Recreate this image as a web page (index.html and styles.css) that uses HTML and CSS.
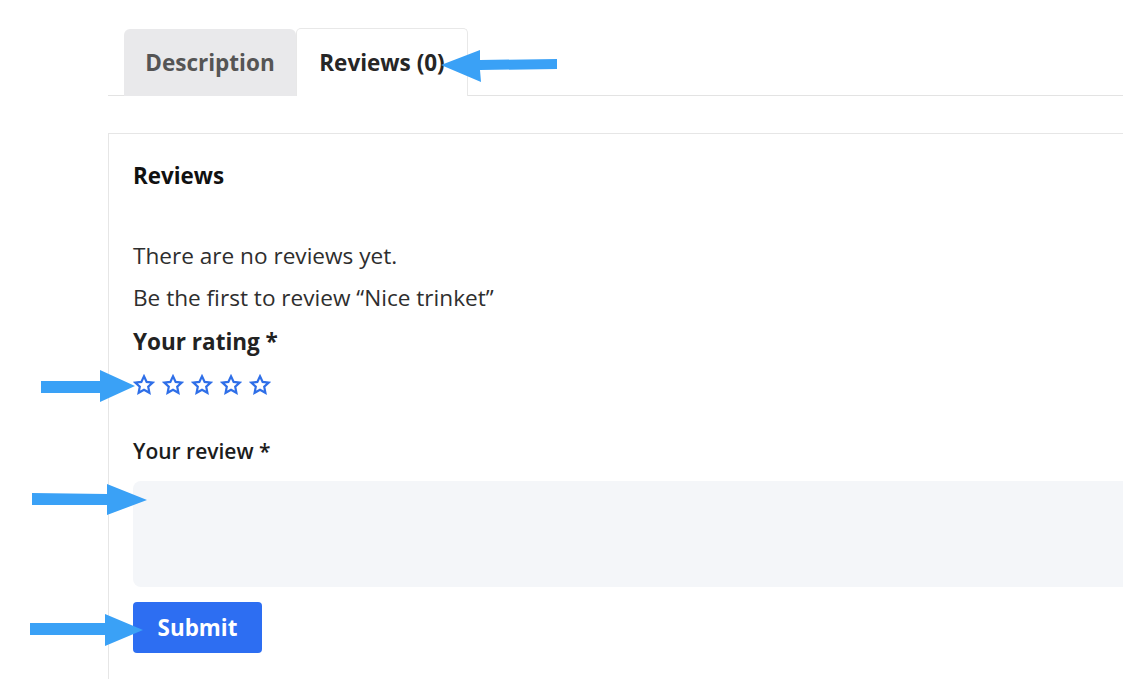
FILE: index.html
```html
<!DOCTYPE html>
<html lang="en">
<head>
	<meta charset="UTF-8">
	<title>Nice trinket - Reviews</title>
	<link rel="stylesheet" href="styles.css">
</head>
<body>
	<div class="product-tabs">
		<ul class="tabs">
			<li class="tab">Description</li>
			<li class="tab active">Reviews (0)</li>
		</ul>

		<div class="panel">
			<h2 class="panel-title">Reviews</h2>
			<p class="note first">There are no reviews yet.</p>
			<p class="note">Be the first to review “Nice trinket”</p>
			<div class="rating-label">Your rating *</div>
			<div class="stars">
				<svg viewBox="0 0 24 24"><polygon points="12 2.5 14.9 8.6 21.5 9.4 16.6 13.9 17.9 20.5 12 17.2 6.1 20.5 7.4 13.9 2.5 9.4 9.1 8.6"/></svg>
				<svg viewBox="0 0 24 24"><polygon points="12 2.5 14.9 8.6 21.5 9.4 16.6 13.9 17.9 20.5 12 17.2 6.1 20.5 7.4 13.9 2.5 9.4 9.1 8.6"/></svg>
				<svg viewBox="0 0 24 24"><polygon points="12 2.5 14.9 8.6 21.5 9.4 16.6 13.9 17.9 20.5 12 17.2 6.1 20.5 7.4 13.9 2.5 9.4 9.1 8.6"/></svg>
				<svg viewBox="0 0 24 24"><polygon points="12 2.5 14.9 8.6 21.5 9.4 16.6 13.9 17.9 20.5 12 17.2 6.1 20.5 7.4 13.9 2.5 9.4 9.1 8.6"/></svg>
				<svg viewBox="0 0 24 24"><polygon points="12 2.5 14.9 8.6 21.5 9.4 16.6 13.9 17.9 20.5 12 17.2 6.1 20.5 7.4 13.9 2.5 9.4 9.1 8.6"/></svg>
			</div>
			<label class="review-label" for="comment">Your review *</label>
			<textarea id="comment" class="review-box"></textarea>
			<button class="submit">Submit</button>
		</div>
	</div>

	<!-- annotation arrows -->
	<svg class="arrows" viewBox="0 0 1123 679">
		<polygon points="557,59 557,69 480,70 481,82 441,65 480,50 480,60"/>
		<polygon points="41,381 100,381 100,370 135,386 100,402 100,393 41,393"/>
		<polygon points="32,493 107,494 107,484 147,500 107,515 107,505 32,505"/>
		<polygon points="30,623 105,623 105,614 143,630 105,646 105,635 30,635"/>
	</svg>
</body>
</html>
```

FILE: styles.css
```css
*{
	padding:0;
	margin:0;
	box-sizing: border-box;
}
html, body{
	overflow: hidden;
}
body{
	width: 1123px;
	height: 679px;
	background: #fff;
	color: #333;
	font-family: "Open Sans", "Noto Sans", sans-serif;
	position: relative;
}
.product-tabs{
	margin-left: 108px;
	padding-top: 28px;
	width: 1015px;
	overflow: hidden;
}
.tabs{
	display: flex;
	list-style: none;
	padding-left: 16px;
	border-bottom: 1px solid #e3e3e3;
	height: 68px;
}
.tab{
	width: 172px;
	height: 67px;
	margin-top: 1px;
	display: flex;
	align-items: center;
	justify-content: center;
	background: #e9e9eb;
	border-radius: 6px 6px 0 0;
	color: #555;
	font-size: 22.5px;
	font-weight: 700;
}
.tab.active{
	margin-top: 0;
	height: 68px;
	background: #fff;
	color: #262626;
	border: 1px solid #e8e8e8;
	border-bottom: none;
	border-radius: 5px 5px 0 0;
	padding-bottom: 1px;
}
.panel{
	margin-top: 37px;
	border-top: 1px solid #e6e6e6;
	border-left: 1px solid #e6e6e6;
	padding: 29px 0 40px 24px;
}
.panel-title{
	font-size: 22.4px;
	line-height: 26px;
	font-weight: 700;
	color: #111;
}
.note{
	font-size: 22.6px;
	line-height: 42px;
	color: #2e2e2e;
}
.note.first{
	margin-top: 46px;
}
.rating-label{
	padding-top: 2px;
	font-size: 22.5px;
	line-height: 42px;
	font-weight: 700;
	color: #222;
}
.stars{
	display: flex;
	gap: 7px;
	margin-top: 10px;
	height: 24px;
	align-items: center;
}
.stars svg{
	width: 22px;
	height: 22px;
	fill: none;
	stroke: #2f6fe8;
	stroke-width: 2.4;
	stroke-linejoin: miter;
}
.review-label{
	display: block;
	margin-top: 41px;
	font-size: 21px;
	line-height: 26px;
	font-weight: 600;
	color: #1c1c1c;
}
.review-box{
	display: block;
	margin-top: 17px;
	width: 1000px;
	height: 106px;
	border: none;
	border-radius: 8px 0 0 8px;
	background: #f4f6f9;
	resize: none;
}
.submit{
	display: block;
	margin-top: 15px;
	width: 129px;
	height: 51px;
	border: none;
	border-radius: 4px;
	background: #2d6ef2;
	color: #fff;
	font-family: "Open Sans", "Noto Sans", sans-serif;
	font-size: 22.4px;
	font-weight: 700;
}
.arrows{
	position: absolute;
	top: 0;
	left: 0;
	width: 1123px;
	height: 679px;
	fill: #3aa1f6;
	pointer-events: none;
}
```
